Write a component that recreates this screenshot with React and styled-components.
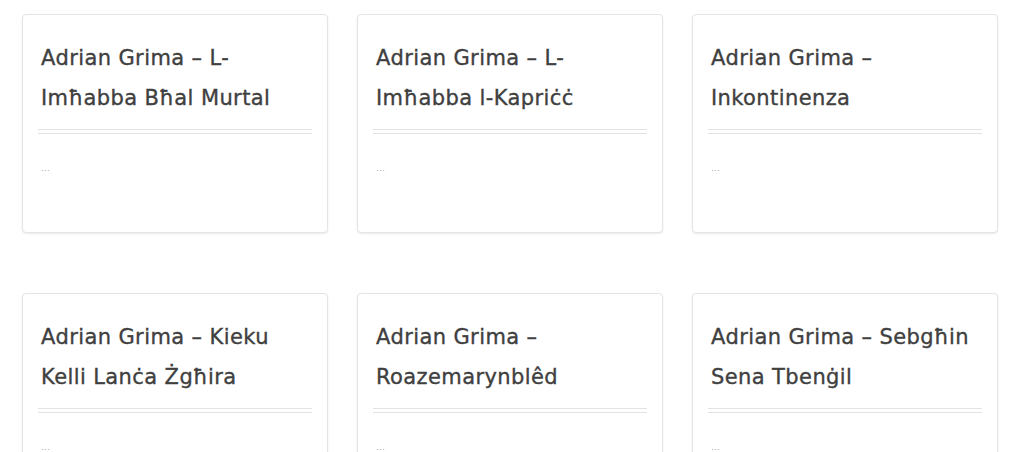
import styled, { createGlobalStyle } from "styled-components";

const GlobalStyle = createGlobalStyle`
  html, body {
    margin: 0;
    padding: 0;
    background: #fff;
  }
  body {
    font-family: "DejaVu Sans", "Liberation Sans", sans-serif;
  }
`;

const Grid = styled.div`
  display: grid;
  grid-template-columns: repeat(3, 306px);
  column-gap: 29px;
  row-gap: 60px;
  padding: 14px 0 0 22px;
`;

const Card = styled.article`
  box-sizing: border-box;
  height: 219px;
  background: #fff;
  border: 1px solid #e4e4e4;
  border-radius: 4px;
  box-shadow: 0 1px 2px rgba(0, 0, 0, 0.08);
  padding: 23px 15px 0 15px;
`;

const Title = styled.h2`
  margin: 0;
  padding: 0 3px;
  font-family: "DejaVu Sans", "Liberation Sans", sans-serif;
  font-size: 21px;
  font-weight: 400;
  letter-spacing: 0.4px;
  line-height: 40px;
  color: #404040;
  -webkit-text-stroke: 0.35px #404040;
`;

const Rule = styled.hr`
  box-sizing: border-box;
  height: 5px;
  margin: 11px 0 0;
  border: 0;
  border-top: 1px solid #e2e2e2;
  border-bottom: 1px solid #e2e2e2;
`;

const Excerpt = styled.p`
  margin: 28px 0 0 3px;
  font-size: 9px;
  color: #aaa;
  line-height: 12px;
`;

const posts = [
  "Adrian Grima – L-Imħabba Bħal Murtal",
  "Adrian Grima – L-Imħabba l-Kapriċċ",
  "Adrian Grima – Inkontinenza",
  "Adrian Grima – Kieku Kelli Lanċa Żgħira",
  "Adrian Grima – Roazemarynblêd",
  "Adrian Grima – Sebgħin Sena Tbenġil",
];

export default function App() {
  return (
    <>
      <GlobalStyle />
      <Grid>
        {posts.map((title) => (
          <Card key={title}>
            <Title>{title}</Title>
            <Rule />
            <Excerpt>…</Excerpt>
          </Card>
        ))}
      </Grid>
    </>
  );
}
